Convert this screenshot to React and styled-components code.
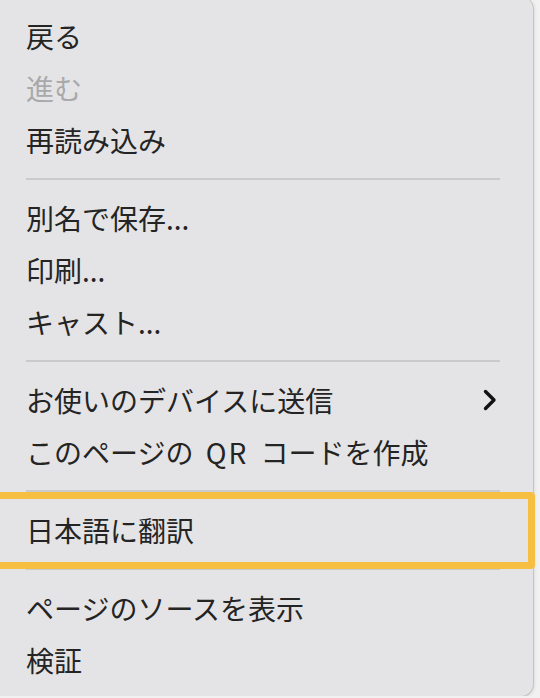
import React from "react";
import styled, { createGlobalStyle } from "styled-components";

const GlobalStyle = createGlobalStyle`
  html, body {
    margin: 0;
    padding: 0;
    background: #f1f1f2;
    overflow: hidden;
  }
  body {
    font-family: "Noto Sans CJK JP", "Noto Sans", sans-serif;
  }
`;

const Menu = styled.div`
  width: 533px;
  margin-top: -3px;
  padding: 13px 0 10px;
  box-sizing: border-box;
  background: #e4e4e6;
  border-radius: 0 12px 12px 0;
  box-shadow: 0 0 0 1px rgba(0, 0, 0, 0.13), 1px 1px 4px rgba(0, 0, 0, 0.12);
`;

const Item = styled.div`
  height: 52px;
  display: flex;
  align-items: center;
  justify-content: space-between;
  padding: 0 36px 0 26px;
  font-size: 28px;
  line-height: 1;
  color: ${(p) => (p.disabled ? "#a9a9ab" : "#242424")};
  word-spacing: ${(p) => (p.$wide ? "6px" : "normal")};
  white-space: pre;
`;

const Latin = styled.span`
  letter-spacing: 2px;
`;

const Separator = styled.div`
  height: 2px;
  margin: 12px 33px 12px 26px;
  background: #cacacc;
`;

const Highlight = styled.div`
  position: relative;

  &::after {
    content: "";
    position: absolute;
    top: 2px;
    bottom: 1px;
    left: -12px;
    right: -2px;
    border: 7px solid #f6bf41;
    border-radius: 4px;
    pointer-events: none;
  }
`;

const Chevron = () => (
  <svg width="14" height="22" viewBox="0 0 14 22">
    <polyline
      points="2.5,2.5 11,11 2.5,19.5"
      fill="none"
      stroke="#111"
      strokeWidth="3.4"
      strokeLinecap="round"
      strokeLinejoin="round"
    />
  </svg>
);

const App = () => (
  <>
    <GlobalStyle />
    <Menu>
      <Item>戻る</Item>
      <Item disabled>進む</Item>
      <Item>再読み込み</Item>
      <Separator />
      <Item>別名で保存...</Item>
      <Item>印刷...</Item>
      <Item>キャスト...</Item>
      <Separator />
      <Item>
        お使いのデバイスに送信
        <Chevron />
      </Item>
      <Item $wide>
        <span>
          このページの <Latin>QR</Latin> コードを作成
        </span>
      </Item>
      <Highlight>
        <Separator />
        <Item>日本語に翻訳</Item>
        <Separator />
      </Highlight>
      <Item>ページのソースを表示</Item>
      <Item>検証</Item>
    </Menu>
  </>
);

export default App;
